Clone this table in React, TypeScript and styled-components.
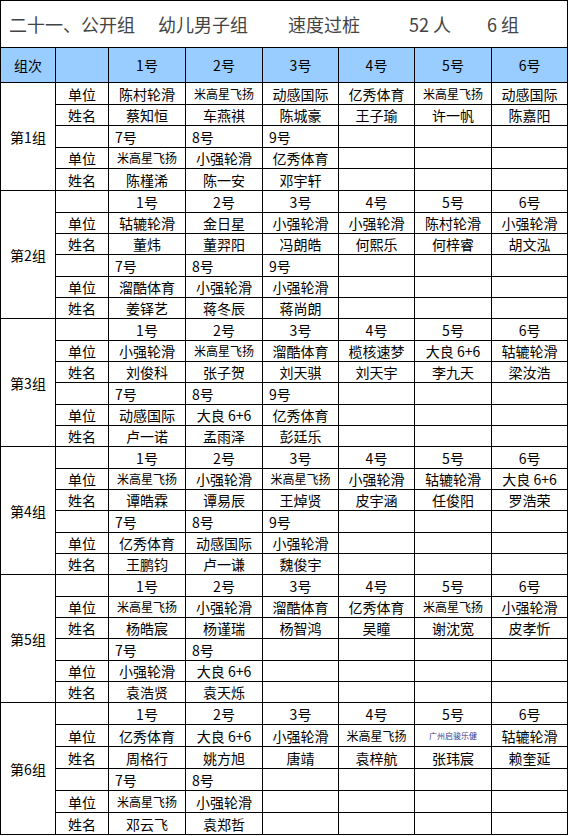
import React from 'react';
import styled, { createGlobalStyle } from 'styled-components';

const GlobalStyle = createGlobalStyle`
  html, body {
    margin: 0;
    padding: 0;
    background: #ffffff;
  }
  body {
    font-family: "Noto Sans CJK SC", "Noto Sans", sans-serif;
    color: #000;
  }
`;

// Layout
const Sheet = styled.table`
  width: 568px;
  table-layout: fixed;
  border-collapse: collapse;
  font-size: 14px;
  line-height: 1;
`;

const TitleCell = styled.td`
  height: 46px;
  border: 1px solid #000;
  padding: 0 0 0 8px;
  font-size: 18px;
  color: #444;
`;

const TitleLine = styled.div`
  display: flex;
  align-items: center;
  white-space: nowrap;
`;

const TitlePart = styled.span<{ $gap?: number }>`
  margin-left: ${p => p.$gap || 0}px;
`;

const HeadRow = styled.tr`
  height: 35px;
  background: #99ccff;
`;

const HeadCell = styled.td`
  border: 1px solid #000;
  text-align: center;
  padding: 0;
`;

const DataRow = styled.tr<{ $h?: number }>`
  height: ${p => p.$h || 21}px;
`;

const GroupCell = styled.td`
  border: 1px solid #000;
  text-align: center;
  padding: 0;
`;

const Cell = styled.td<{ $left?: boolean; $size?: number; $tint?: string }>`
  border: 1px solid #000;
  padding: ${p => (p.$left ? '0 0 0 6px' : '0')};
  text-align: ${p => (p.$left ? 'left' : 'center')};
  font-size: ${p => p.$size || 14}px;
  color: ${p => p.$tint || '#000'};
  white-space: nowrap;
  overflow: hidden;
`;

interface Group {
  units: string[];
  names: string[];
  extraUnits: string[];
  extraNames: string[];
}

const groups: Group[] = [
  {
    units: ['陈村轮滑', '米高星飞扬', '动感国际', '亿秀体育', '米高星飞扬', '动感国际'],
    names: ['蔡知恒', '车燕祺', '陈城豪', '王子瑜', '许一帆', '陈嘉阳'],
    extraUnits: ['米高星飞扬', '小强轮滑', '亿秀体育'],
    extraNames: ['陈槿浠', '陈一安', '邓宇轩'],
  },
  {
    units: ['轱辘轮滑', '金日星', '小强轮滑', '小强轮滑', '陈村轮滑', '小强轮滑'],
    names: ['董炜', '董羿阳', '冯朗皓', '何熙乐', '何梓睿', '胡文泓'],
    extraUnits: ['溜酷体育', '小强轮滑', '小强轮滑'],
    extraNames: ['姜铎艺', '蒋冬辰', '蒋尚朗'],
  },
  {
    units: ['小强轮滑', '米高星飞扬', '溜酷体育', '榄核速梦', '大良 6+6', '轱辘轮滑'],
    names: ['刘俊科', '张子贺', '刘天骐', '刘天宇', '李九天', '梁汝浩'],
    extraUnits: ['动感国际', '大良 6+6', '亿秀体育'],
    extraNames: ['卢一诺', '孟雨泽', '彭廷乐'],
  },
  {
    units: ['米高星飞扬', '小强轮滑', '米高星飞扬', '小强轮滑', '轱辘轮滑', '大良 6+6'],
    names: ['谭皓霖', '谭易辰', '王焯贤', '皮宇涵', '任俊阳', '罗浩荣'],
    extraUnits: ['亿秀体育', '动感国际', '小强轮滑'],
    extraNames: ['王鹏钧', '卢一谦', '魏俊宇'],
  },
  {
    units: ['米高星飞扬', '小强轮滑', '溜酷体育', '亿秀体育', '米高星飞扬', '小强轮滑'],
    names: ['杨皓宸', '杨谨瑞', '杨智鸿', '吴瞳', '谢沈宽', '皮孝忻'],
    extraUnits: ['小强轮滑', '大良 6+6'],
    extraNames: ['袁浩贤', '袁天烁'],
  },
  {
    units: ['亿秀体育', '大良 6+6', '小强轮滑', '米高星飞扬', '广州启骏乐健', '轱辘轮滑'],
    names: ['周格行', '姚方旭', '唐靖', '袁梓航', '张玮宸', '赖奎延'],
    extraUnits: ['米高星飞扬', '小强轮滑'],
    extraNames: ['邓云飞', '袁郑哲'],
  },
];

const widths = [55, 53, 77, 77, 76, 76, 77, 76];
const seats = [1, 2, 3, 4, 5, 6];

// row heights per group as in the sheet (first group has no seat row)
const rowHeights = (index: number) => {
  if (index === 0) return [22, 21, 22, 21, 22];
  if (index === 5) return [22, 22, 22, 22, 22, 22];
  return [22, 21, 21, 22, 21, 21];
};

// shrink-to-fit sizing like the spreadsheet does for long unit names
const isTiny = (u: string) => u === '广州启骏乐健';
const unitSize = (u: string) => {
  if (isTiny(u)) return 8;
  if (u === '米高星飞扬') return 12;
  return 14;
};
const unitTint = (u: string) => (isTiny(u) ? '#3a3a8c' : undefined);

const pad = (list: string[]) => [0, 1, 2, 3, 4, 5].map(i => list[i] || '');

const GroupBlock: React.FC<{ g: Group; index: number }> = ({ g, index }) => {
  const first = index === 0;
  const hs = rowHeights(index);
  const rows = hs.length;
  const off = first ? -1 : 0;
  const extraSeats = g.extraUnits.map((_, i) => `${7 + i}号`);
  return (
    <>
      {!first && (
        <DataRow $h={hs[0]}>
          <GroupCell rowSpan={rows}>第{index + 1}组</GroupCell>
          <Cell />
          {seats.map(s => (
            <Cell key={s}>{s}号</Cell>
          ))}
        </DataRow>
      )}
      <DataRow $h={hs[1 + off]}>
        {first && <GroupCell rowSpan={rows}>第{index + 1}组</GroupCell>}
        <Cell>单位</Cell>
        {g.units.map((u, i) => (
          <Cell key={i} $size={unitSize(u)} $tint={unitTint(u)}>{u}</Cell>
        ))}
      </DataRow>
      <DataRow $h={hs[2 + off]}>
        <Cell>姓名</Cell>
        {g.names.map((n, i) => (
          <Cell key={i}>{n}</Cell>
        ))}
      </DataRow>
      <DataRow $h={hs[3 + off]}>
        <Cell />
        {pad(extraSeats).map((s, i) => (
          <Cell key={i} $left>{s}</Cell>
        ))}
      </DataRow>
      <DataRow $h={hs[4 + off]}>
        <Cell>单位</Cell>
        {pad(g.extraUnits).map((u, i) => (
          <Cell key={i} $size={unitSize(u)}>{u}</Cell>
        ))}
      </DataRow>
      <DataRow $h={hs[5 + off]}>
        <Cell>姓名</Cell>
        {pad(g.extraNames).map((n, i) => (
          <Cell key={i}>{n}</Cell>
        ))}
      </DataRow>
    </>
  );
};

const App: React.FC = () => {
  return (
    <>
      <GlobalStyle />
      <Sheet>
        <colgroup>
          {widths.map((w, i) => (
            <col key={i} style={{ width: w }} />
          ))}
        </colgroup>
        <tbody>
          <tr>
            <TitleCell colSpan={8}>
              <TitleLine>
                <TitlePart>二十一、公开组</TitlePart>
                <TitlePart $gap={23}>幼儿男子组</TitlePart>
                <TitlePart $gap={40}>速度过桩</TitlePart>
                <TitlePart $gap={49}>52 人</TitlePart>
                <TitlePart $gap={36}>6 组</TitlePart>
              </TitleLine>
            </TitleCell>
          </tr>
          <HeadRow>
            <HeadCell>组次</HeadCell>
            <HeadCell />
            {seats.map(s => (
              <HeadCell key={s}>{s}号</HeadCell>
            ))}
          </HeadRow>
          {groups.map((g, i) => (
            <GroupBlock key={i} g={g} index={i} />
          ))}
        </tbody>
      </Sheet>
    </>
  );
};

export default App;
